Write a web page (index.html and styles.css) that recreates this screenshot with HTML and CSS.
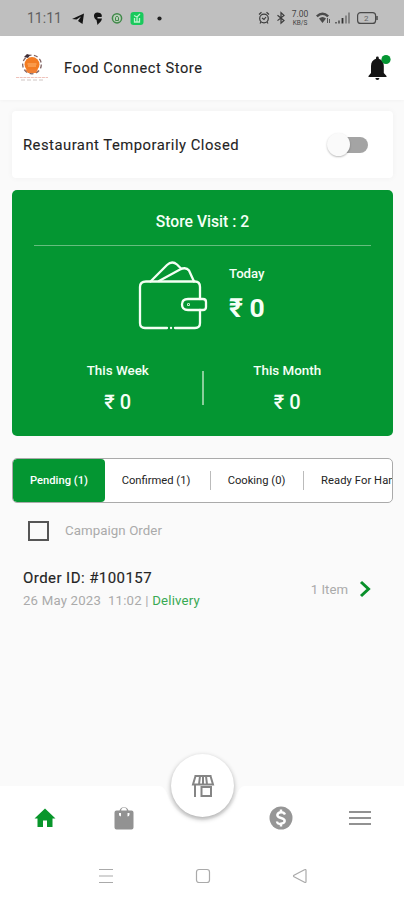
FILE: index.html
```
<!DOCTYPE html>
<html lang="en">
<head>
<meta charset="utf-8">
<title>Food Connect Store</title>
<link rel="stylesheet" href="styles.css">
</head>
<body>
<div class="status">
  <span class="clock">11:11</span>
  <svg class="status-apps" width="96" height="16" viewBox="0 0 96 16">
    <path d="M0 9 12 3.500 10.500 14 6 11 9 6.500 4.500 9.500Z" fill="#151515"/>
    <path d="M25.500 2.500c4 0 5 3 4 4.500h-4v1.500h4.500c-.5 3-2.500 4-4.500 6.500l-1-5c-3-1.500-4-7.500 1-7.500z" fill="#151515"/>
    <circle cx="45" cy="8.300" r="4.600" fill="#bbd0bb" stroke="#41894a" stroke-width="1.500"/>
    <path d="M43.500 10.500V7.500a1.600 1.600 0 0 1 3 0v3z" fill="none" stroke="#41894a"/>
    <rect x="58.500" y="2" width="13" height="13" rx="3" fill="#19c95c"/>
    <path d="M62 5.500 65 7l3-3M62.500 8v4h5V8M65 7v5" fill="none" stroke="#b9f5cc" stroke-width="1.300"/>
    <circle cx="87.500" cy="8.500" r="2.100" fill="#222"/>
  </svg>
  <span class="spacer"></span>
  <svg width="28" height="14" viewBox="0 0 28 14" fill="none" stroke="#3c3c3c" stroke-width="1.200">
    <circle cx="6" cy="7.500" r="4.300"/><path d="m1 3.500 2.500-2.300M11 3.500 8.500 1.200M4 7l2 1.500L8 6M3 11l-1 1.500M9 11l1 1.500"/>
    <path d="m19.500 4.300 6.500 5.200-3 2.700V1.700l3 2.700-6.500 5.200"/>
  </svg>
  <span class="speed"><span>7.00</span><span>KB/S</span></span>
  <svg class="signal" width="64" height="14" viewBox="0 0 64 14" fill="none">
    <path d="M1 4.500Q7.500-1.500 14 4.500L12.300 6.200Q7.500 2 2.700 6.200ZM4 7.500Q7.500 4.500 11 7.500L7.500 12Z" fill="#4a4a4a"/>
    <path d="M12.500 7v5M14.500 8v4" stroke="#555"/>
    <path d="M21 11v1.500M24 9.500v3" stroke="#555" stroke-width="1.700"/><path d="M27.500 7v5.500" stroke="#333" stroke-width="1.800"/><path d="M31 4.500v8M34 1.500v11" stroke="#666" stroke-width="1.300"/>
    <rect x="42.600" y="1.600" width="18" height="10.800" rx="3" stroke="#4a4a4a" stroke-width="1.200"/><path d="M62 5v4" stroke="#4a4a4a" stroke-width="1.500"/>
    <text x="49" y="10" class="battery-text">2</text>
  </svg>
</div>
<header class="header">
  <svg class="logo" width="34" height="32" viewBox="0 0 34 32">
    <circle cx="17" cy="12.500" r="9.300" fill="none" stroke="#806464" stroke-width="1.300" stroke-dasharray="4 2.500"/>
    <circle cx="17" cy="12.500" r="7.500" fill="#f37c22"/>
    <path d="M10 17.500h13l-2 3.500h-8z" fill="#f08035"/>
    <path d="M12.500 12h9M13 14h8" stroke="#ffb874" stroke-width="1.200"/>
    <path d="m9 5 3-3 3 1-2 3z" fill="#402f38"/>
    <path d="M1 25.500h32" stroke="#efc2ba" stroke-width="1.200" stroke-dasharray="3 .7"/><path d="M6 28h22" stroke="#cfc6c4" stroke-dasharray="4 2"/>
  </svg>
  <h1>Food Connect Store</h1>
  <svg class="bell" width="26" height="28" viewBox="0 0 26 28">
    <path d="M3.500 22 6 19v-7c0-4 2-6.500 5-7.300V4a1.400 1.400 0 0 1 2.800 0v.7c3 .8 5 3.300 5 7.300v7l2.700 3v1h-18z" fill="#151515"/>
    <path d="M10.400 24h4a2 2 0 0 1-4 0z" fill="#151515"/><circle cx="21" cy="5.500" r="4.600" fill="#049632"/>
  </svg>
</header>
<main>
  <section class="closed-card">
    <span>Restaurant Temporarily Closed</span><span class="toggle"><i></i></span>
  </section>
  <section class="stats">
    <h2>Store Visit : 2</h2>
    <div class="today">
      <svg width="70" height="70" viewBox="0 0 70 70" fill="none" stroke="#f4fff4" stroke-width="2.300" stroke-linecap="round" stroke-linejoin="round">
        <path d="M29 67H7Q2 67 2 62V26Q2 20.500 8 20.500H57Q62 20.500 62 26V38M62 49V62Q62 67 57 67H37"/>
        <path d="M33 67h.1M12.500 20.500 29 4Q34-.8 39 3.500L43 7.500M21 20 42 8.500Q48 5.500 51 9.500L56 20.500"/>
        <path d="M65 38H50Q44 38 44 43.500T50 49H65Q68 49 68 46V41Q68 38 65 38Z"/><circle cx="50.500" cy="43.500" r=".4"/>
      </svg>
      <div class="today-value"><span>Today</span><strong>₹ 0</strong></div>
    </div>
    <div class="periods">
      <div><span>This Week</span><strong>₹ 0</strong></div>
      <i class="period-rule"></i>
      <div><span>This Month</span><strong>₹ 0</strong></div>
    </div>
  </section>
  <nav class="tabs">
    <span class="tab active">Pending (1)</span><span class="tab confirmed">Confirmed (1)</span><span class="tab cooking">Cooking (0)</span><span class="tab ready">Ready For Handover (0)</span>
  </nav>
  <label class="campaign"><span class="checkbox"></span><span>Campaign Order</span></label>
  <section class="order">
    <div class="order-info"><h3>Order ID: #100157</h3><p><span class="date">26 May 2023&nbsp; 11:02 |</span> <span class="delivery">Delivery</span></p></div>
    <span class="items">1 Item</span>
    <svg width="13" height="18" viewBox="0 0 13 18"><path d="m2 2 7.500 7L2 16" fill="none" stroke="#09902a" stroke-width="3"/></svg>
  </section>
</main>
<footer>
  <svg class="notch" width="84" height="48" viewBox="0 0 84 48"><path d="M0 0H84Q79 1 76 10A36 36 0 0 1 8 10Q5 1 0 0Z" fill="#fafafa"/></svg>
  <div class="fab">
    <svg width="24" height="24" viewBox="0 0 24 24" fill="none" stroke="#858585" stroke-width="2">
      <path d="M3.500 2h17M4.500 2 2 10.500h20L19.500 2M9 2 8 10.500M15 2l1 8.500M12 2v8M4 11v12M10.500 13h9.500v9h-9.500z"/>
    </svg>
  </div>
  <nav class="bottom-nav">
    <svg viewBox="0 0 24 24"><path d="M10 21v-6.500h4V21h5.500v-8.500h3L12 2.500 1.500 12.500h3V21z" fill="#08962b"/></svg>
    <svg viewBox="0 0 24 24"><path d="M19.500 4.500h-3A4.700 4.700 0 0 0 7.500 4.500h-3q-2 0-2 2v15q0 2 2 2h15q2 0 2-2v-15q0-2-2-2ZM12 1.800A2.700 2.700 0 0 1 14.800 4.500H9.200A2.700 2.700 0 0 1 12 1.800ZM8.500 10.500A2 2 0 0 1 7 8.500V7h2v2.500zM15.500 10.500V7h2v1.500a2 2 0 0 1-2 2z" fill="#929292" fill-rule="evenodd"/></svg>
    <span></span>
    <svg viewBox="0 0 24 24"><circle cx="12" cy="12" r="11.500" fill="#969696"/><path d="M16 8.500Q15 6.300 12 6.300T8.300 9Q8.300 11 12 12t3.700 3-3.700 2.700T8 15.500M12 3.500v3M12 17.500v3" fill="none" stroke="white" stroke-width="2.400"/></svg>
    <svg viewBox="0 0 24 24"><path d="M1 6h22M1 12h22M1 18h22" stroke="#929292" stroke-width="2"/></svg>
  </nav>
  <div class="system-nav">
    <svg viewBox="0 0 16 16"><path d="M1 1.500h14M1 8h14M1 14.500h14"/></svg>
    <svg viewBox="0 0 16 16"><rect x="1.500" y="1.500" width="13" height="13" rx="2.500"/></svg>
    <svg viewBox="0 0 16 16"><path d="M14 2.500v11q0 1.500-1.500.7L2 8.700Q1 8 2 7.300l10.500-5.500Q14 1 14 2.500Z"/></svg>
  </div>
</footer>
</body>
</html>
```
FILE: styles.css
```
* { box-sizing: border-box; }
body { margin: 0; width: 404px; height: 900px; overflow: hidden; background: #fafafa; font-family: Roboto, sans-serif; color: #242424; display: flex; flex-direction: column; }
h1, h2, h3, p { margin: 0; font-weight: 500; }
svg { display: block; flex: none; }
.status { height: 36px; flex: none; display: flex; align-items: center; background: #bfbfbf; padding: 0 25px 0 27px; }
.clock { width: 45px; font-size: 14px; letter-spacing: 0; color: #606060; }
.spacer { flex: 1; }
.speed { display: flex; flex-direction: column; align-items: center; width: 18px; margin: 0 6px 0 5px; font-size: 8.500px; line-height: 10px; color: #444; }
.speed span:last-child { font-size: 6.500px; line-height: 8px; }
.battery-text { font: 8px Roboto, sans-serif; fill: #666; }
.header { height: 64px; flex: none; display: flex; align-items: center; padding: 0 13px 0 15px; background: #fff; box-shadow: 0 1px 3px #00000008; }
h1 { flex: 1; margin-left: 15px; font-size: 14.600px; letter-spacing: .57px; font-weight: 400; -webkit-text-stroke: .1px; }
.bell { margin-top: -1px; }
main { padding: 11px 11px 0 12px; }
.closed-card { height: 67px; display: flex; justify-content: space-between; align-items: center; padding: 0 25px 0 11px; background: #fff; border-radius: 4px; font-size: 14.800px; letter-spacing: .5px; box-shadow: 0 0 6px #0000000b; -webkit-text-stroke: .1px; }
.toggle { display: flex; align-items: center; width: 38px; height: 16px; background: #a4a4a4; border-radius: 8px; }
.toggle i { width: 23px; height: 23px; margin-left: -3px; flex: none; border-radius: 50%; background: #fafafa; box-shadow: 0 1px 2px #0004; }
.stats { height: 246px; margin-top: 12px; padding: 0 22px; background: #049632; border-radius: 5px; color: #f5fff6; }
h2 { height: 56px; padding-top: 21px; border-bottom: 1px solid #66bd7e; text-align: center; font-size: 15.700px; line-height: 21px; }
.today { display: flex; padding: 15px 0 0 104px; height: 85px; }
.today-value { display: flex; flex-direction: column; margin: 4px 0 0 21px; }
.today-value span { font-size: 13.200px; line-height: 17px; font-weight: 500; }
.today-value strong { font-size: 26.500px; line-height: 30px; margin-top: 11px; }
.periods { display: flex; align-items: center; padding-top: 30px; }
.periods > div { flex: 1; display: flex; flex-direction: column; align-items: center; }
.periods span { font-size: 13.400px; line-height: 20px; font-weight: 500; }
.periods strong { font-size: 20px; font-weight: 500; line-height: 26px; margin-top: 8px; }
.period-rule { width: 2px; height: 34px; background: #8ace9b; margin-top: 0; }
.tabs { height: 45px; display: flex; align-items: center; margin-top: 22px; border: 1px solid #aaa; border-radius: 5px; background: #fff; overflow: hidden; }
.tab { flex: none; text-align: center; font-size: 11.200px; line-height: 19px; white-space: nowrap; }
.tab.active { width: 92px; height: 43px; line-height: 43px; background: #049632; color: #fff; border-radius: 4px; font-weight: 500; }
.confirmed { width: 106px; padding-right: 3px; border-right: 1px solid #bbb; }
.cooking { width: 93px; padding-right: 1px; border-right: 1px solid #bbb; }
.ready { padding-left: 17px; letter-spacing: .08px; }
.campaign { height: 55px; display: flex; align-items: center; padding-left: 16px; gap: 16px; font-size: 13.300px; letter-spacing: .06px; color: #aaa; }
.checkbox { width: 21px; height: 20px; border: 2px solid #555; }
.order { display: flex; align-items: center; height: 54px; padding: 0 21px 0 11px; margin-top: 4px; }
.order-info { flex: 1; }
h3 { font-size: 15px; line-height: 23px; letter-spacing: .44px; font-weight: 400; -webkit-text-stroke: .15px; }
p { font-size: 13.200px; letter-spacing: .2px; line-height: 21px; font-weight: 400; color: #aaa; white-space: nowrap; }
.delivery { color: #38a953; }
.items { font-size: 13.200px; color: #aaa; margin-right: 11px; }
footer { position: relative; height: 114px; margin-top: auto; flex: none; background: #fff; }
.notch { position: absolute; top: 0; left: 160px; }
.fab { position: absolute; left: 171px; top: -32px; width: 63px; height: 63px; border-radius: 50%; display: grid; place-items: center; background: #fff; box-shadow: 0 2px 5px #0005; }
.bottom-nav { display: grid; grid-template-columns: repeat(5, 1fr); height: 64px; padding: 0 5px 0 6px; align-items: center; justify-items: center; }
.bottom-nav svg { width: 24px; height: 24px; }
.system-nav { height: 50px; display: flex; justify-content: center; gap: 81px; padding: 18px 0 0 1px; }
.system-nav svg { width: 16px; height: 16px; fill: none; stroke: #aaa; stroke-width: 1.200; }
```
